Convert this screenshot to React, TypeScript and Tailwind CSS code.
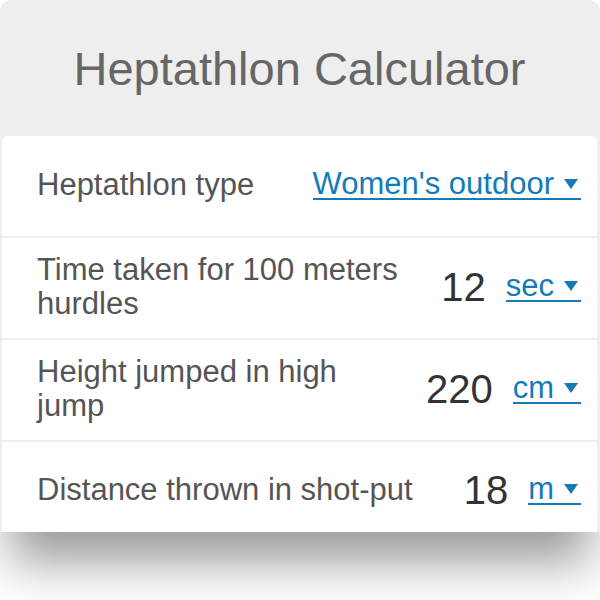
import React from "react";

type Row = {
  label: string;
  value?: string;
  unit: string;
};

const rows: Row[] = [
  { label: "Heptathlon type", unit: "Women's outdoor" },
  { label: "Time taken for 100 meters hurdles", value: "12", unit: "sec" },
  { label: "Height jumped in high jump", value: "220", unit: "cm" },
  { label: "Distance thrown in shot-put", value: "18", unit: "m" },
];

function UnitSelect({ text }: { text: string }) {
  return (
    <span className="inline-flex items-center whitespace-nowrap border-b-2 border-[#157bb6] text-[31px] leading-[29px] text-[#157bb6]">
      {text}
      <svg
        className="ml-[10px] mr-[3px] mt-[1px]"
        width="14"
        height="10"
        viewBox="0 0 14 10"
      >
        <path d="M0 0h14L7 10z" fill="currentColor" />
      </svg>
    </span>
  );
}

function CalcRow({ row, last }: { row: Row; last: boolean }) {
  return (
    <div
      className={`flex items-center bg-white pl-[35px] pr-[16px] ${
        last ? "h-[90px] pt-[6px]" : "h-[100px] pb-[3px]"
      }`}
    >
      <div className="flex-1 pr-[12px] text-[31px] leading-[34px] text-[#555]">
        {row.label}
      </div>
      {row.value && (
        <div className="w-[74px] text-right text-[40px] text-[#333]">
          {row.value}
        </div>
      )}
      <div className={row.value ? "ml-5" : ""}>
        <UnitSelect text={row.unit} />
      </div>
    </div>
  );
}

export default function App() {
  return (
    <div className="h-[600px] w-[600px] overflow-hidden bg-white font-['Liberation_Sans',Arial,sans-serif]">
      <div className="rounded-t-[12px] bg-[#eeeeee] pl-[2px] pr-[3px] shadow-[0_40px_50px_-10px_rgba(0,0,0,0.4)]">
        <h1 className="flex h-[136px] items-center justify-center pt-[3px] text-[47px] text-[#666]">
          Heptathlon Calculator
        </h1>
        <div className="flex flex-col gap-[2px] overflow-hidden rounded-t-[6px]">
          {rows.map((row, i) => (
            <CalcRow key={row.label} row={row} last={i === rows.length - 1} />
          ))}
        </div>
      </div>
    </div>
  );
}
